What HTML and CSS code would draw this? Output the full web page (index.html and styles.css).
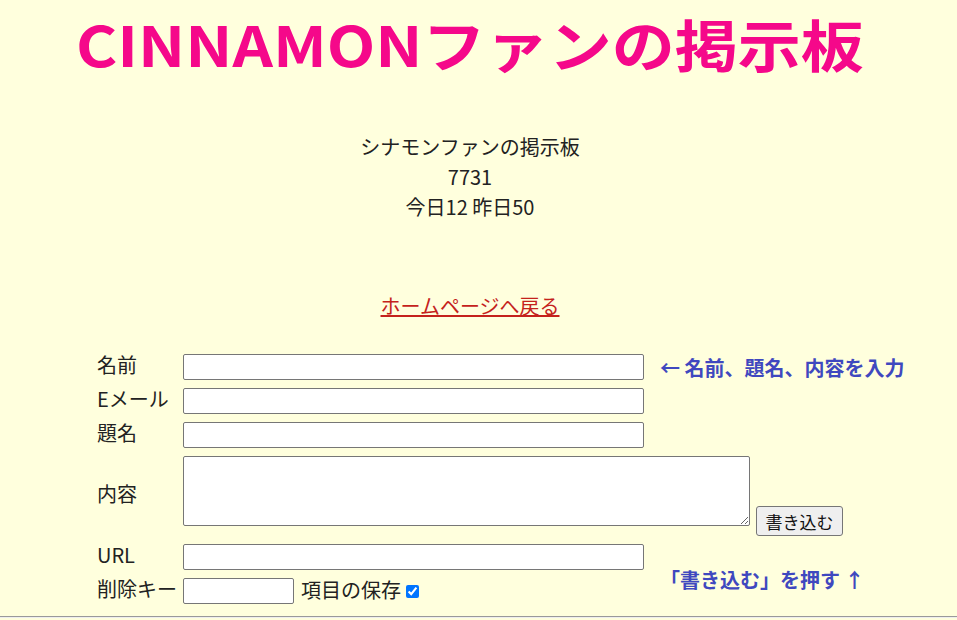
FILE: index.html
```html
<!DOCTYPE html>
<html lang="ja">
<head>
  <meta charset="UTF-8">
  <title>CINNAMONファンの掲示板</title>
  <link rel="stylesheet" href="styles.css">
</head>
<body>

  <div class="page">
    <h1 class="title"><span class="title-text">CINNAMONファンの掲示板</span></h1>

    <p class="info">
      シナモンファンの掲示板<br>
      7731<br>
      今日12 昨日50
    </p>

    <p class="home"><a href="#">ホームページへ戻る</a></p>

    <form class="post-form" onsubmit="return false;">
      <label for="name">名前</label>
      <input type="text" id="name" class="field">
      <div class="note note-top">← 名前、題名、内容を入力</div>

      <label for="email">Eメール</label>
      <input type="text" id="email" class="field">

      <label for="subject">題名</label>
      <input type="text" id="subject" class="field">

      <label for="body">内容</label>
      <div class="body-row">
        <textarea id="body"></textarea>
        <button type="submit" class="submit">書き込む</button>
      </div>

      <label for="url">URL</label>
      <input type="text" id="url" class="field">
      <div class="note note-bottom">「書き込む」を押す ↑</div>

      <label for="delkey">削除キー</label>
      <div class="key-row">
        <input type="password" id="delkey" class="key">
        <span class="save">項目の保存</span>
        <input type="checkbox" id="save" checked>
      </div>
    </form>

    <hr>
  </div>

</body>
</html>
```

FILE: styles.css
```css
body {
  margin: 0;
  background-color: #ffffdd;
  font-family: "Noto Sans CJK JP", "Noto Sans", sans-serif;
  color: #222;
}

.page {
  width: 940px;
}

.title {
  margin: 0;
  height: 86px;
  line-height: 86px;
  text-align: center;
  font-size: 56px;
  font-weight: bold;
  color: #f5088a;
  white-space: nowrap;
}

/* the original title font is wider than it is tall */
.title-text {
  display: inline-block;
  transform: scaleX(1.126);
}

.info {
  margin: 46px 0 0;
  text-align: center;
  font-size: 20px;
  line-height: 30px;
}

.home {
  margin: 69px 0 0;
  text-align: center;
  font-size: 20px;
  line-height: 30px;
}

.home a {
  color: #c4221c;
}

.post-form {
  margin: 33px 0 0 97px;
  display: grid;
  grid-template-columns: 86px 477px 1fr;
  grid-template-rows: 26px 26px 26px 80px 26px 26px;
  row-gap: 8px;
  align-items: center;
  font-size: 20px;
}

.post-form label {
  grid-column: 1;
  line-height: 26px;
  padding-bottom: 4px;
}

.field {
  grid-column: 2;
  width: 461px;
  height: 26px;
  box-sizing: border-box;
  border: 1px solid #767676;
  border-radius: 2px;
  background: white;
}

.note {
  grid-column: 3;
  font-size: 20px;
  font-weight: bold;
  color: #3f48bf;
  white-space: nowrap;
}

.note-bottom {
  grid-row: 5 / 7;
  padding: 11px 0 0 0;
}

.body-row {
  grid-column: 2 / 4;
  align-self: start;
  display: flex;
  align-items: flex-start;
  gap: 6px;
}

.body-row textarea {
  width: 567px;
  height: 70px;
  box-sizing: border-box;
  border: 1px solid #767676;
  border-radius: 2px;
  background: white;
  resize: both;
  margin: 0;
}

.submit {
  margin-top: 50px;
  width: 87px;
  height: 30px;
  padding: 0;
  font-family: inherit;
  font-size: 17px;
  background-color: #efefef;
  border: 1px solid #767676;
  border-radius: 3px;
  color: #111;
}

.key-row {
  grid-column: 2;
  display: flex;
  align-items: center;
}

.key {
  width: 111px;
  height: 26px;
  box-sizing: border-box;
  border: 1px solid #767676;
  border-radius: 2px;
  background: white;
}

.save {
  margin-left: 7px;
  padding-bottom: 4px;
}

.key-row input[type="checkbox"] {
  margin: 0 0 0 5px;
  width: 13px;
  height: 13px;
}

hr {
  margin: 12px 0 0;
  width: 957px;
  border: none;
  border-top: 1px solid #9a9a9a;
  border-bottom: 1px solid #eee;
}
```
